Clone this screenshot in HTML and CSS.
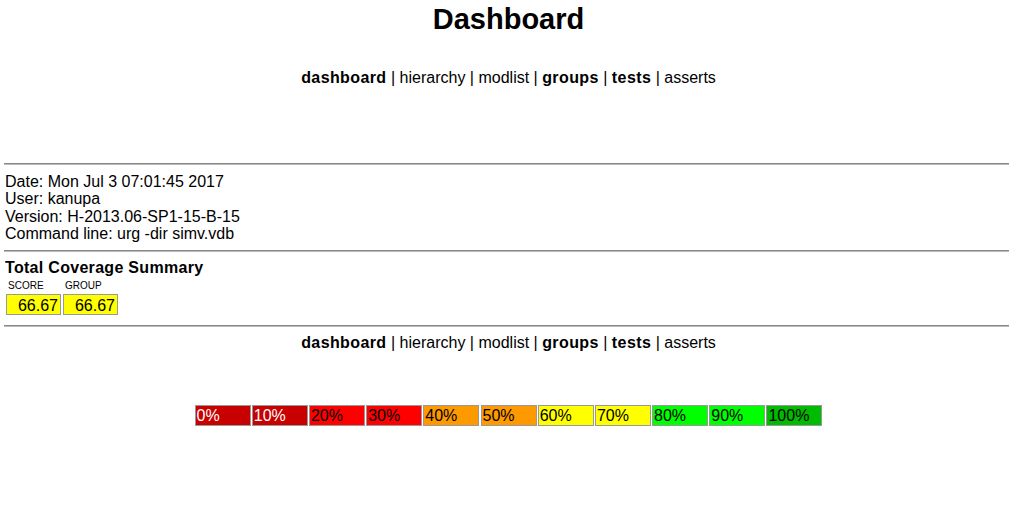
FILE: index.html
```html
<!DOCTYPE html>
<html>
<head>
<meta charset="utf-8">
<link rel="stylesheet" href="styles.css">
<title>Dashboard</title>
</head>
<body>
<h1 class="title">Dashboard</h1>
<div class="nav nav-top">
  <b>dashboard</b> | <span>hierarchy</span> | <span>modlist</span> | <b>groups</b> | <b>tests</b> | <span>asserts</span>
</div>
<hr class="rule rule-first">
<div class="info">
  <div>Date: Mon Jul 3 07:01:45 2017</div>
  <div>User: kanupa</div>
  <div>Version: H-2013.06-SP1-15-B-15</div>
  <div>Command line: urg -dir simv.vdb</div>
</div>
<hr class="rule">
<div class="summary">
  <div class="summary-title">Total Coverage Summary</div>
  <div class="scores">
    <div class="score">
      <div class="score-label">SCORE</div>
      <div class="score-box">66.67</div>
    </div>
    <div class="score">
      <div class="score-label">GROUP</div>
      <div class="score-box">66.67</div>
    </div>
  </div>
</div>
<hr class="rule">
<div class="nav nav-bottom">
  <b>dashboard</b> | <span>hierarchy</span> | <span>modlist</span> | <b>groups</b> | <b>tests</b> | <span>asserts</span>
</div>
<div class="legend">
  <div class="cell c0">0%</div>
  <div class="cell c0">10%</div>
  <div class="cell c2">20%</div>
  <div class="cell c2">30%</div>
  <div class="cell c4">40%</div>
  <div class="cell c4">50%</div>
  <div class="cell c6">60%</div>
  <div class="cell c6">70%</div>
  <div class="cell c8">80%</div>
  <div class="cell c8">90%</div>
  <div class="cell c10">100%</div>
</div>
</body>
</html>
```
FILE: styles.css
```css
html {
  overflow: hidden;
  background: #fff;
}
body {
  margin: 0 0 0 4px;
  width: 1009px;
  font-family: "Liberation Sans", Arial, sans-serif;
  font-size: 16px;
  color: #000;
}
.title {
  margin: 2px 0 0 0;
  font-size: 29px;
  line-height: 34px;
  font-weight: bold;
  text-align: center;
}
.nav {
  font-size: 16px;
  line-height: 18px;
  text-align: center;
}
.nav b {
  letter-spacing: 0.4px;
}
.nav-top {
  margin-top: 33px;
}
.rule {
  margin: 0;
  height: 0;
  border: 0;
  border-top: 1px solid #888;
  border-bottom: 1px solid #bbb;
}
.rule-first {
  margin-top: 76px;
}
.info {
  font-size: 16px;
  line-height: 17.3px;
  padding: 8px 0 8px 1px;
}
.summary {
  padding: 7px 0 10px 1px;
}
.summary-title {
  font-size: 16px;
  font-weight: bold;
  letter-spacing: 0.3px;
  line-height: 18px;
}
.scores {
  display: flex;
  gap: 2px;
  margin-top: 2px;
  padding-left: 1px;
}
.score-label {
  font-size: 10px;
  line-height: 12px;
  padding: 1px 0 0 2px;
  height: 14px;
}
.score-box {
  width: 51px;
  height: 18px;
  padding: 1px 2px 0 0;
  border: 1px solid #999;
  background: #ffff00;
  text-align: right;
  font-size: 16px;
  line-height: 19px;
}
.nav-bottom {
  margin-top: 7px;
}
.legend {
  display: flex;
  justify-content: center;
  gap: 1.2px;
  margin-top: 53px;
}
.cell {
  width: 53px;
  height: 19px;
  border: 1px solid #999;
  font-size: 16px;
  line-height: 19px;
  padding-left: 1px;
  color: #000;
}
.c0 { background: #c80000; color: #fff; }
.c2 { background: #ff0000; }
.c4 { background: #ff9900; }
.c6 { background: #ffff00; }
.c8 { background: #00ff00; }
.c10 { background: #00bb00; }
```
